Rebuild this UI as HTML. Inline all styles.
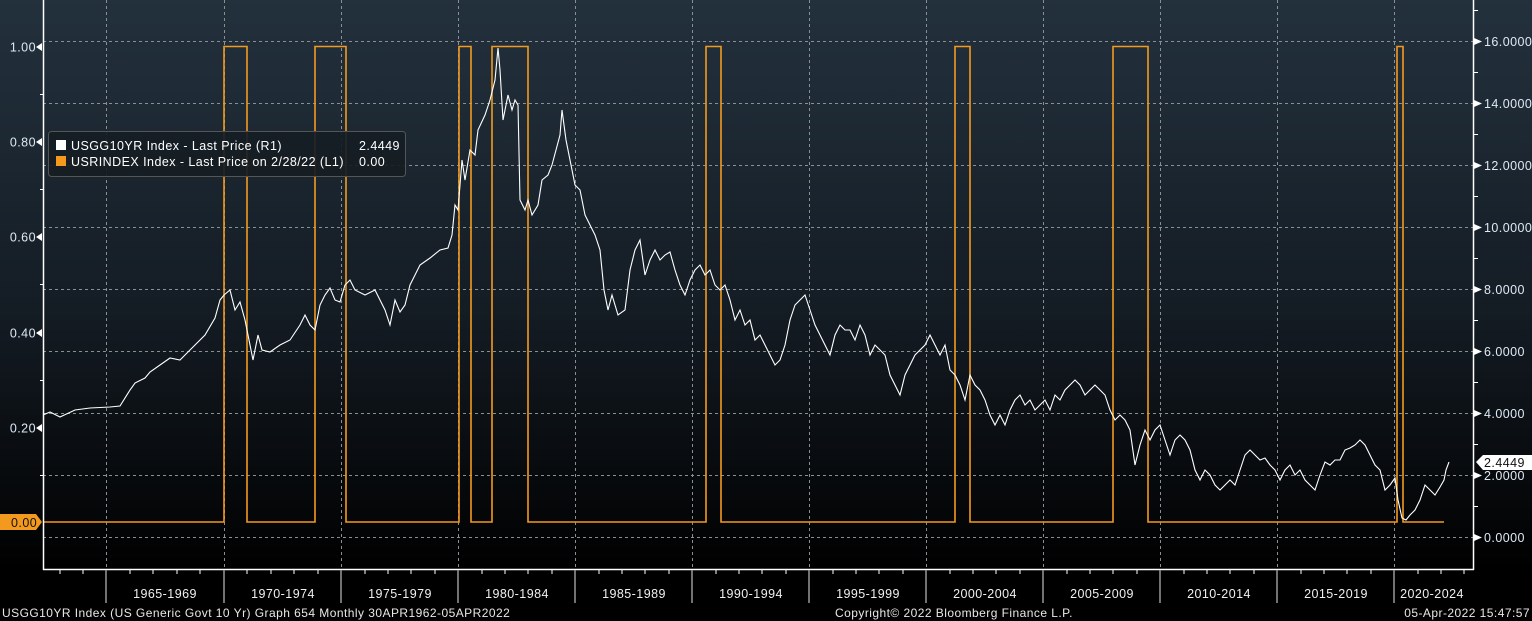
<!DOCTYPE html>
<html><head><meta charset="utf-8"><style>
html,body{margin:0;padding:0;width:1532px;height:621px;overflow:hidden;background:#000}
svg{display:block}
text{font-family:"Liberation Sans",sans-serif;letter-spacing:0.45px}
</style></head><body>
<svg width="1532" height="621" xmlns="http://www.w3.org/2000/svg">
<defs><linearGradient id="bg" x1="0" y1="0" x2="0" y2="1">
<stop offset="0" stop-color="#23313d"/><stop offset="0.5" stop-color="#141c24"/><stop offset="0.92" stop-color="#000"/><stop offset="1" stop-color="#000"/></linearGradient></defs>
<rect width="1532" height="621" fill="url(#bg)"/>
<g stroke="#8a8f94" stroke-width="1" stroke-dasharray="3,3">
<line x1="43" x2="1473" y1="41.5" y2="41.5"/><line x1="43" x2="1473" y1="103.5" y2="103.5"/>
<line x1="43" x2="1473" y1="165.5" y2="165.5"/><line x1="43" x2="1473" y1="227.5" y2="227.5"/>
<line x1="43" x2="1473" y1="289.5" y2="289.5"/><line x1="43" x2="1473" y1="351.5" y2="351.5"/>
<line x1="43" x2="1473" y1="413.5" y2="413.5"/><line x1="43" x2="1473" y1="475.5" y2="475.5"/>
<line x1="43" x2="1473" y1="537.5" y2="537.5"/>
<line x1="106.5" x2="106.5" y1="0" y2="569"/><line x1="224.5" x2="224.5" y1="0" y2="569"/>
<line x1="341.5" x2="341.5" y1="0" y2="569"/><line x1="458.5" x2="458.5" y1="0" y2="569"/>
<line x1="575.5" x2="575.5" y1="0" y2="569"/><line x1="692.5" x2="692.5" y1="0" y2="569"/>
<line x1="809.5" x2="809.5" y1="0" y2="569"/><line x1="926.5" x2="926.5" y1="0" y2="569"/>
<line x1="1043.5" x2="1043.5" y1="0" y2="569"/><line x1="1160.5" x2="1160.5" y1="0" y2="569"/>
<line x1="1277.5" x2="1277.5" y1="0" y2="569"/><line x1="1394.5" x2="1394.5" y1="0" y2="569"/>
</g>
<polyline fill="none" stroke="#f39a1e" stroke-width="1.6" points="43,522 224,522 224,46.5 247,46.5 247,522 315,522 315,46.5 346,46.5 346,522 459,522 459,46.5 471,46.5 471,522 492,522 492,46.5 528,46.5 528,522 706,522 706,46.5 721,46.5 721,522 955,522 955,46.5 970,46.5 970,522 1113,522 1113,46.5 1148,46.5 1148,522 1397,522 1397,46.5 1403,46.5 1403,522 1444,522"/>
<polyline fill="none" stroke="#fff" stroke-width="1.1" points="43,415 50,412 60,417 75,410 90,408 110,407 120,406 130,390 135,383 145,378 150,372 160,365 170,358 180,360 185,355 195,345 205,335 215,318 220,300 224,295 230,290 235,310 240,302 245,320 250,345 253,360 258,335 262,350 270,352 280,345 290,340 300,325 305,315 310,325 315,330 320,305 325,295 330,288 335,300 340,302 345,285 350,280 355,290 365,295 375,290 385,310 390,325 395,300 400,312 405,305 410,285 415,275 420,265 430,258 440,250 448,248 452,235 455,205 458,210 462,160 465,180 470,150 475,155 478,130 485,115 490,100 495,80 498,48 500,70 503,120 508,95 512,110 515,100 518,105 520,200 525,210 528,200 532,215 538,205 542,180 548,175 552,165 556,150 560,135 562,110 566,140 570,160 575,185 580,190 585,215 590,225 595,235 600,250 604,290 608,310 612,295 618,315 625,310 630,270 635,250 640,240 645,275 650,260 655,250 660,260 665,255 670,252 675,270 680,285 685,295 690,280 695,270 700,265 705,275 710,270 715,285 720,290 725,285 730,300 735,320 740,310 745,325 750,320 755,340 760,335 765,345 770,355 775,365 780,360 785,345 790,320 795,305 800,300 805,295 810,310 815,325 820,335 825,345 830,355 835,335 840,325 845,330 850,330 855,340 860,325 865,335 870,355 875,345 880,350 885,355 890,375 895,385 900,395 905,375 910,365 915,355 920,350 925,345 930,335 935,345 940,355 945,345 950,370 955,375 960,385 965,400 970,375 975,385 980,390 985,400 990,415 995,425 1000,415 1005,425 1010,410 1015,400 1020,395 1025,405 1030,400 1035,410 1040,405 1045,400 1050,410 1055,395 1060,400 1065,390 1070,385 1075,380 1080,385 1085,395 1090,390 1095,385 1100,390 1105,395 1110,410 1115,420 1120,415 1125,420 1130,430 1135,465 1140,445 1145,430 1150,440 1155,430 1160,425 1165,440 1170,455 1175,440 1180,435 1185,440 1190,450 1195,470 1200,480 1205,470 1210,475 1215,485 1220,490 1225,485 1230,480 1235,485 1240,470 1245,455 1250,450 1255,455 1260,460 1265,458 1270,465 1275,470 1280,480 1285,470 1290,465 1295,475 1300,470 1305,480 1310,485 1315,490 1320,475 1325,462 1330,465 1335,460 1340,460 1345,450 1350,448 1355,445 1360,440 1365,445 1370,455 1375,465 1380,470 1385,490 1390,485 1395,478 1398,500 1402,518 1406,520 1410,515 1415,510 1420,500 1425,485 1430,490 1435,495 1440,487 1444,480 1446,470 1449,462"/>
<g stroke="#fff" stroke-width="1.5">
<line x1="43.5" x2="43.5" y1="0" y2="570"/><line x1="1473.5" x2="1473.5" y1="0" y2="570"/>
<line x1="43" x2="1474" y1="569.5" y2="569.5"/>
</g>
<g stroke="#fff" stroke-width="1">
<line x1="40" x2="43" y1="94.5" y2="94.5"/><line x1="40" x2="43" y1="189.5" y2="189.5"/><line x1="40" x2="43" y1="284.5" y2="284.5"/><line x1="40" x2="43" y1="380.5" y2="380.5"/><line x1="40" x2="43" y1="475.5" y2="475.5"/>
<line x1="1474" x2="1478" y1="10.5" y2="10.5"/><line x1="1474" x2="1478" y1="72.5" y2="72.5"/><line x1="1474" x2="1478" y1="134.5" y2="134.5"/><line x1="1474" x2="1478" y1="196.5" y2="196.5"/><line x1="1474" x2="1478" y1="258.5" y2="258.5"/><line x1="1474" x2="1478" y1="320.5" y2="320.5"/><line x1="1474" x2="1478" y1="382.5" y2="382.5"/><line x1="1474" x2="1478" y1="444.5" y2="444.5"/><line x1="1474" x2="1478" y1="506.5" y2="506.5"/>
</g>
<g stroke="#999" stroke-width="1.5">
<line x1="106" x2="106" y1="570" y2="603"/><line x1="224" x2="224" y1="570" y2="603"/><line x1="341" x2="341" y1="570" y2="603"/><line x1="458" x2="458" y1="570" y2="603"/><line x1="575" x2="575" y1="570" y2="603"/><line x1="692" x2="692" y1="570" y2="603"/><line x1="809" x2="809" y1="570" y2="603"/><line x1="926" x2="926" y1="570" y2="603"/><line x1="1043" x2="1043" y1="570" y2="603"/><line x1="1160" x2="1160" y1="570" y2="603"/><line x1="1277" x2="1277" y1="570" y2="603"/><line x1="1394" x2="1394" y1="570" y2="603"/>
</g>
<g stroke="#fff" stroke-width="1">
<path d="M60,570v4M83,570v4M130,570v4M153,570v4M177,570v4M200,570v4M247,570v4M271,570v4M294,570v4M318,570v4M365,570v4M388,570v4M411,570v4M435,570v4M482,570v4M505,570v4M528,570v4M552,570v4M599,570v4M622,570v4M645,570v4M669,570v4M716,570v4M739,570v4M762,570v4M786,570v4M833,570v4M856,570v4M879,570v4M903,570v4M950,570v4M973,570v4M996,570v4M1020,570v4M1067,570v4M1090,570v4M1113,570v4M1137,570v4M1184,570v4M1207,570v4M1230,570v4M1254,570v4M1301,570v4M1324,570v4M1347,570v4M1371,570v4M1418,570v4M1441,570v4M1464,570v4"/>
</g>
<g fill="#dfe9f5" font-size="12.5">
<text x="36" y="51.5" text-anchor="end">1.00</text><text x="36" y="146.5" text-anchor="end">0.80</text><text x="36" y="241.5" text-anchor="end">0.60</text><text x="36" y="337.5" text-anchor="end">0.40</text><text x="36" y="432.5" text-anchor="end">0.20</text>
<text x="1484" y="46">16.0000</text><text x="1484" y="108">14.0000</text><text x="1484" y="170">12.0000</text><text x="1484" y="232">10.0000</text><text x="1484" y="294">8.0000</text><text x="1484" y="356">6.0000</text><text x="1484" y="418">4.0000</text><text x="1484" y="480">2.0000</text><text x="1484" y="542">0.0000</text>
</g>
<g fill="#fff">
<path d="M36,47 l6,-4 v8z"/><path d="M36,142 l6,-4 v8z"/><path d="M36,237 l6,-4 v8z"/><path d="M36,333 l6,-4 v8z"/><path d="M36,428 l6,-4 v8z"/>
<path d="M1474,38 l8,3.5 l-8,3.5z"/><path d="M1474,100 l8,3.5 l-8,3.5z"/><path d="M1474,162 l8,3.5 l-8,3.5z"/><path d="M1474,224 l8,3.5 l-8,3.5z"/><path d="M1474,286 l8,3.5 l-8,3.5z"/><path d="M1474,348 l8,3.5 l-8,3.5z"/><path d="M1474,410 l8,3.5 l-8,3.5z"/><path d="M1474,472 l8,3.5 l-8,3.5z"/><path d="M1474,534 l8,3.5 l-8,3.5z"/>
</g>
<path d="M0,514 H36 L42,522 L36,530 H0z" fill="#f39a1e"/>
<text x="11" y="527" font-size="12.5" fill="#111">0.00</text>
<path d="M1476,462 L1483,455 H1532 V470 H1483z" fill="#fff"/>
<text x="1484" y="467" font-size="12.5" fill="#111">2.4449</text>
<rect x="48.5" y="131.5" width="357" height="45" rx="3" fill="#161d24" fill-opacity="0.92" stroke="#555" stroke-width="1"/>
<rect x="56" y="140" width="10" height="10" fill="#fff"/>
<rect x="56" y="156" width="10" height="10" fill="#f39a1e"/>
<g fill="#fff" font-size="12.5">
<text x="71" y="150">USGG10YR Index  - Last Price (R1)</text><text x="359" y="150">2.4449</text>
<text x="71" y="166">USRINDEX Index  - Last Price on 2/28/22 (L1)</text><text x="359" y="166">0.00</text>
</g>
<g fill="#f0f0f0" font-size="12.5" text-anchor="middle">
<text x="165" y="598">1965-1969</text><text x="283" y="598">1970-1974</text><text x="400" y="598">1975-1979</text><text x="517" y="598">1980-1984</text><text x="634" y="598">1985-1989</text><text x="751" y="598">1990-1994</text><text x="868" y="598">1995-1999</text><text x="985" y="598">2000-2004</text><text x="1102" y="598">2005-2009</text><text x="1219" y="598">2010-2014</text><text x="1336" y="598">2015-2019</text><text x="1432" y="598">2020-2024</text>
</g>
<g fill="#e8e8e8" font-size="12">
<text x="2" y="617">USGG10YR Index (US Generic Govt 10 Yr) Graph 654  Monthly 30APR1962-05APR2022</text>
<text x="835" y="617">Copyright© 2022 Bloomberg Finance L.P.</text>
<text x="1530" y="617" text-anchor="end">05-Apr-2022 15:47:57</text>
</g>
</svg>
</body></html>
